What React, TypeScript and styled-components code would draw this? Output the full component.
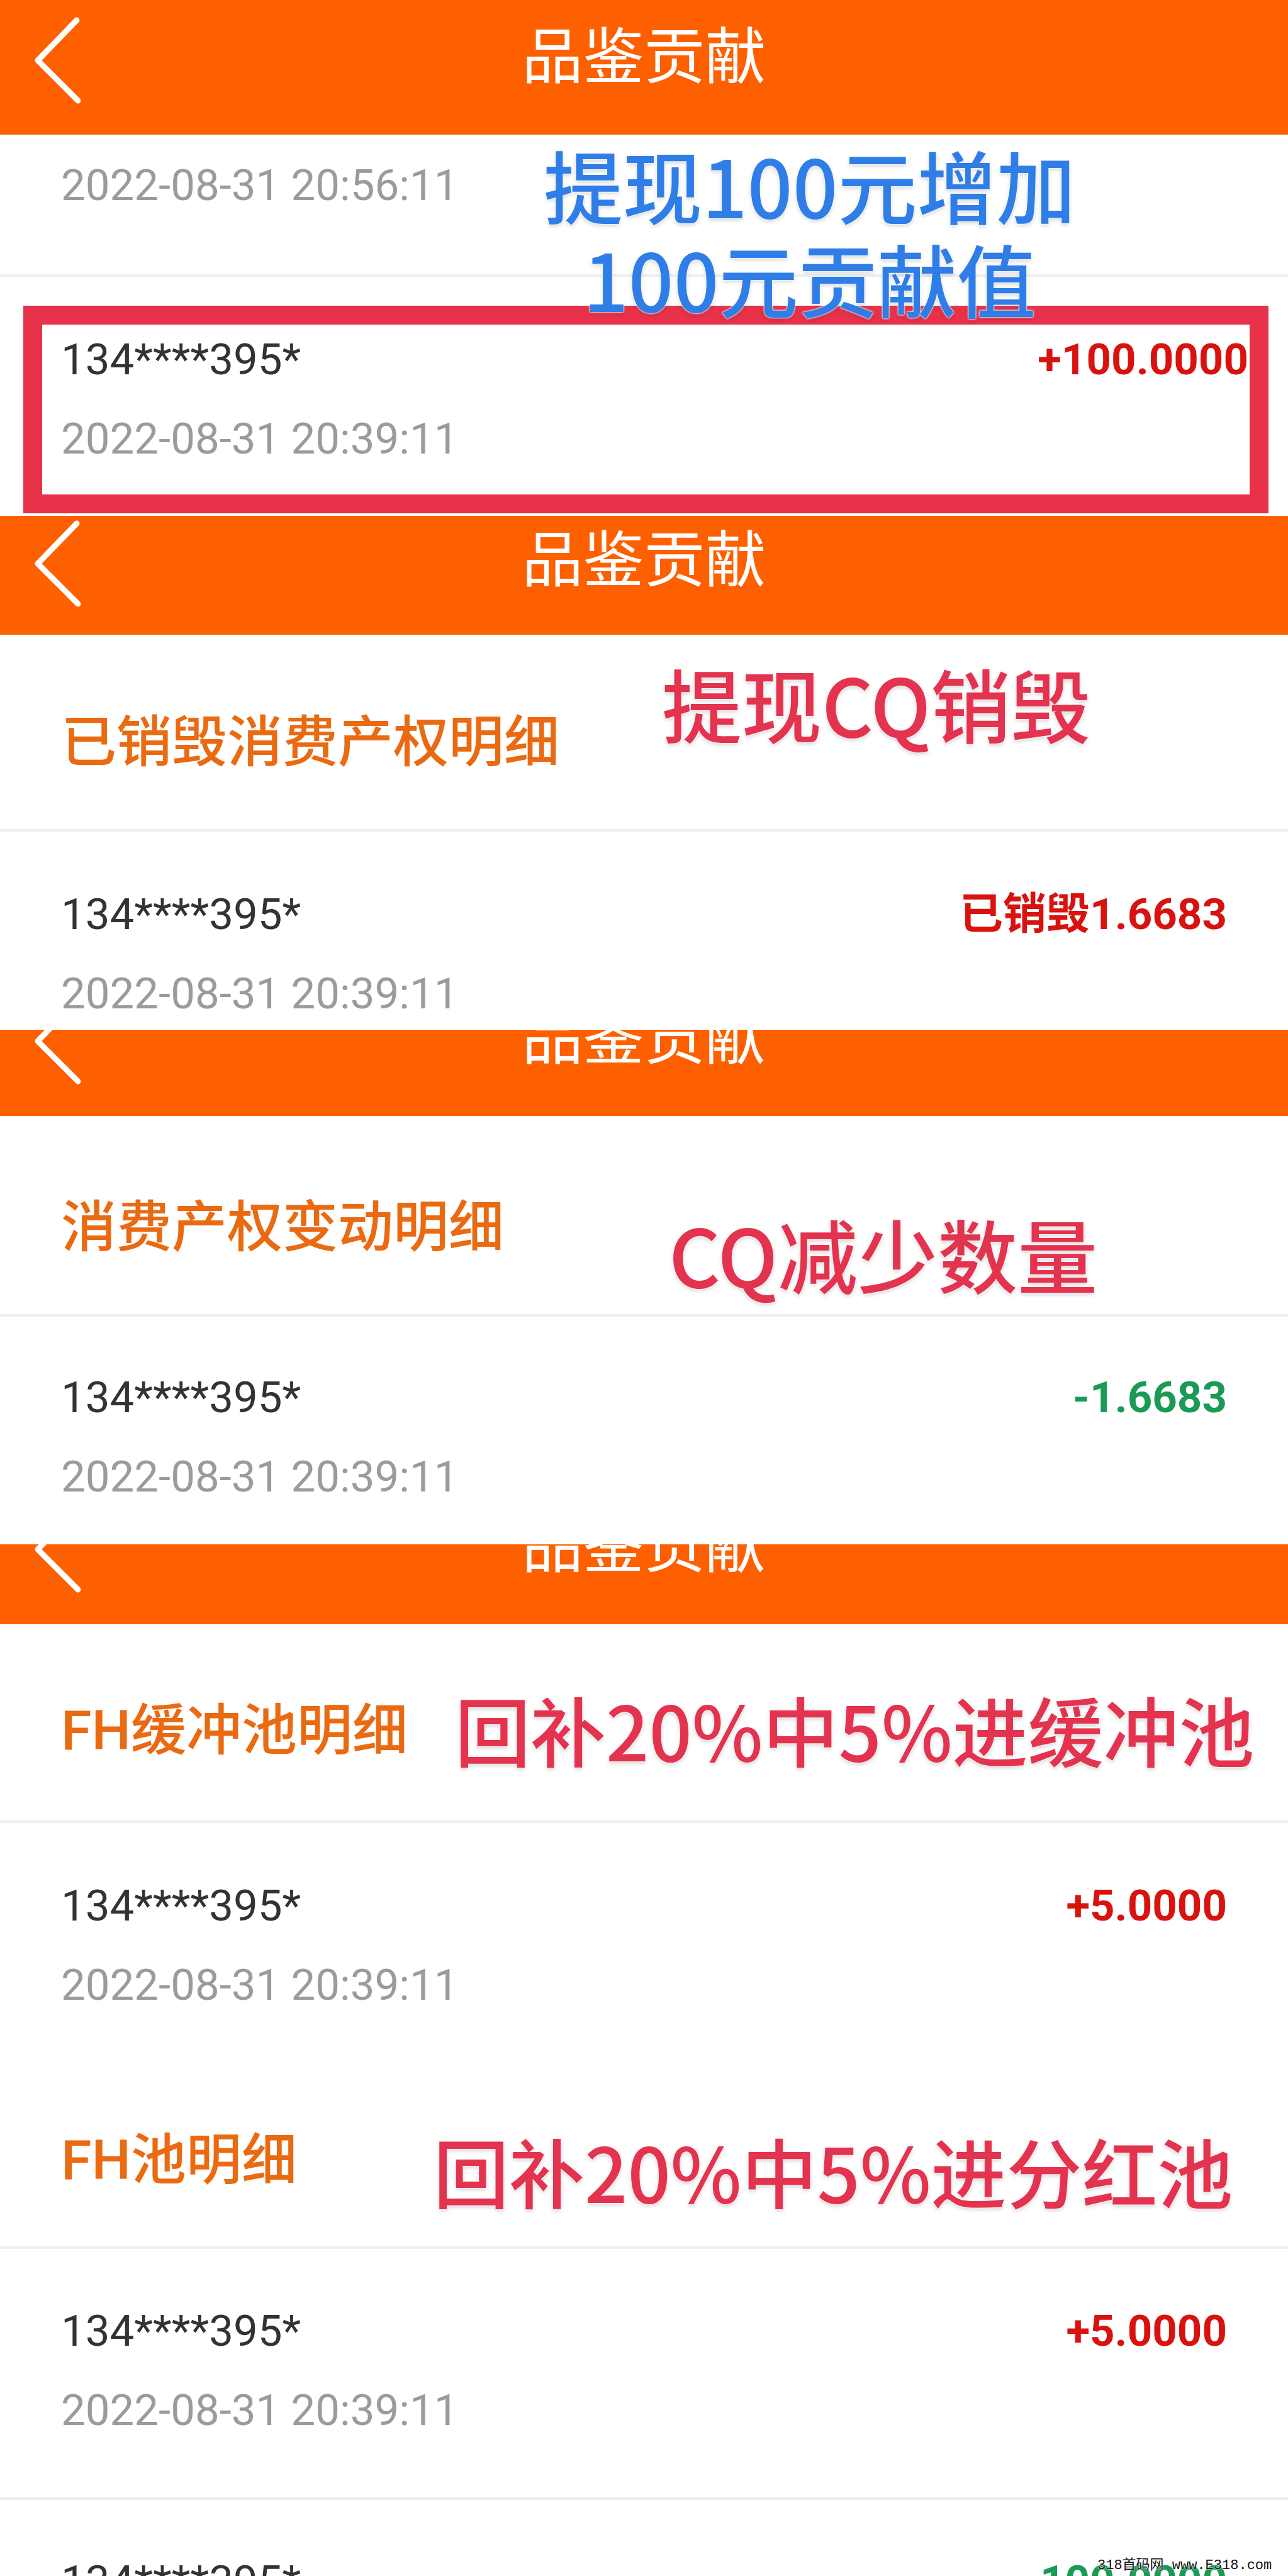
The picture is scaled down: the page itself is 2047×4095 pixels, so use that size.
import React from 'react';
import styled, {createGlobalStyle} from 'styled-components';

const GlobalStyle = createGlobalStyle`
    html, body {
        margin: 0;
        padding: 0;
        background: #fff;
    }
    body {
        font-family: Roboto, 'Noto Sans CJK SC', sans-serif;
    }
`;

const CJK = `'Noto Sans CJK SC', 'Noto Sans', sans-serif`;

const Page = styled.div`
    position: relative;
    width: 2047px;
    height: 4095px;
    overflow: hidden;
    background: #fff;
`;

const Screen = styled.section`
    position: relative;
`;

const Header = styled.header<{$height: number}>`
    height: ${(p) => p.$height}px;
    overflow: hidden;
    background: #fe6000;
`;

const Bar = styled.div<{$height: number; $offset: number}>`
    height: ${(p) => p.$height}px;
    margin-top: ${(p) => p.$offset}px;
    display: grid;
    grid-template-columns: 1fr auto 1fr;
    align-items: center;
`;

const Back = styled.svg`
    margin-left: 52px;
    margin-top: 6px;
`;

const Title = styled.h1`
    margin: 0 0 24px;
    font-family: ${CJK};
    font-size: 97px;
    font-weight: 400;
    line-height: 1;
    color: #fff;
`;

const Divider = styled.div`
    height: 4px;
    background: #efefef;
`;

const TitleBlock = styled.div<{$height: number; $pad: number}>`
    position: relative;
    box-sizing: border-box;
    height: ${(p) => p.$height}px;
    padding: ${(p) => p.$pad}px 0 0 97px;
`;

const SectionTitle = styled.h2`
    margin: 0;
    font-family: Roboto, ${CJK};
    font-size: 88px;
    font-weight: 500;
    line-height: 100px;
    color: #ea6a12;
`;

const Row = styled.div<{$height: number; $pad: number}>`
    box-sizing: border-box;
    height: ${(p) => p.$height}px;
    padding: ${(p) => p.$pad}px 97px 0 97px;
`;

const Line = styled.div`
    display: flex;
    justify-content: space-between;
    align-items: center;
    height: 80px;
`;

const Name = styled.span`
    font-size: 69px;
    line-height: 80px;
    color: #333;
`;

const Amount = styled.span<{$tone: 'red' | 'green'}>`
    font-family: Roboto, ${CJK};
    font-size: 69px;
    font-weight: 700;
    line-height: 80px;
    color: ${(p) => (p.$tone === 'red' ? '#d8130f' : '#1b9a55')};
`;

const Time = styled.div<{$gap?: number}>`
    margin-top: ${(p) => p.$gap ?? 46}px;
    font-size: 69px;
    line-height: 80px;
    color: #9b9b9b;
`;

const Highlight = styled.div`
    box-sizing: border-box;
    height: 330px;
    margin: 46px 31px 4px 37px;
    padding: 16px 2px 0 30px;
    border: 30px solid #e7324a;
`;

const Note = styled.div<{$left: number; $center: number; $size: number; $color: string; $lh?: number}>`
    position: absolute;
    left: ${(p) => p.$left}px;
    top: ${(p) => p.$center}px;
    transform: translateY(-50%);
    font-family: ${CJK};
    font-size: ${(p) => p.$size}px;
    font-weight: 500;
    line-height: ${(p) => p.$lh ?? p.$size}px;
    color: ${(p) => p.$color};
    text-align: center;
    white-space: nowrap;
    text-shadow: 0 0 3px #fff, 0 0 3px #fff, 0 3px 6px rgba(0, 0, 0, 0.18);
`;

const Watermark = styled.div`
    position: absolute;
    left: 1744px;
    bottom: 2px;
    font-family: 'Liberation Mono', ${CJK};
    font-size: 22px;
    line-height: 28px;
    color: #111;
    white-space: nowrap;
    text-shadow: 0 0 2px #fff, 0 0 2px #fff;
`;

const BLUE = '#2f7ee8';
const PINK = '#e3334f';

type HeadProps = {height: number; bar: number; offset?: number};

const AppHeader = ({height, bar, offset = 0}: HeadProps) => (
    <Header $height={height}>
        <Bar
            $height={bar}
            $offset={offset}
        >
            <Back
                width='80'
                height='140'
                viewBox='0 0 80 140'
            >
                <path
                    d='M70 6 L8 70 L72 134'
                    fill='none'
                    stroke='#fff'
                    strokeWidth='9'
                    strokeLinecap='round'
                    strokeLinejoin='round'
                />
            </Back>
            <Title>{'品鉴贡献'}</Title>
            <span/>
        </Bar>
    </Header>
);

type RecordProps = {height: number; pad: number; amount: string; tone: 'red' | 'green'};

const Record = ({height, pad, amount, tone}: RecordProps) => (
    <Row
        $height={height}
        $pad={pad}
    >
        <Line>
            <Name>{'134****395*'}</Name>
            <Amount $tone={tone}>{amount}</Amount>
        </Line>
        <Time>{'2022-08-31 20:39:11'}</Time>
    </Row>
);

const App = () => (
    <Page>
        <GlobalStyle/>

        <Screen>
            <AppHeader
                height={214}
                bar={186}
            />
            <Row
                $height={222}
                $pad={41}
            >
                <Time $gap={0}>{'2022-08-31 20:56:11'}</Time>
            </Row>
            <Divider/>
            <Highlight>
                <Line>
                    <Name>{'134****395*'}</Name>
                    <Amount $tone='red'>{'+100.0000'}</Amount>
                </Line>
                <Time>{'2022-08-31 20:39:11'}</Time>
            </Highlight>
            <Note
                $left={864}
                $center={367}
                $size={126}
                $lh={149}
                $color={BLUE}
            >
                {'提现100元增加'}
                <br/>
                {'100元贡献值'}
            </Note>
        </Screen>

        <Screen>
            <AppHeader
                height={189}
                bar={134}
            />
            <TitleBlock
                $height={309}
                $pad={121}
            >
                <SectionTitle>{'已销毁消费产权明细'}</SectionTitle>
                <Note
                    $left={1052}
                    $center={108}
                    $size={127}
                    $color={PINK}
                >
                    {'提现CQ销毁'}
                </Note>
            </TitleBlock>
            <Divider/>
            <Record
                height={315}
                pad={92}
                amount='已销毁1.6683'
                tone='red'
            />
        </Screen>

        <Screen>
            <AppHeader
                height={137}
                bar={134}
                offset={-58}
            />
            <TitleBlock
                $height={315}
                $pad={127}
            >
                <SectionTitle>{'消费产权变动明细'}</SectionTitle>
                <Note
                    $left={1063}
                    $center={218}
                    $size={127}
                    $color={PINK}
                >
                    {'CQ减少数量'}
                </Note>
            </TitleBlock>
            <Divider/>
            <Record
                height={362}
                pad={89}
                amount='-1.6683'
                tone='green'
            />
        </Screen>

        <Screen>
            <AppHeader
                height={127}
                bar={134}
                offset={-68}
            />
            <TitleBlock
                $height={312}
                $pad={119}
            >
                <SectionTitle>{'FH缓冲池明细'}</SectionTitle>
                <Note
                    $left={723}
                    $center={166}
                    $size={120}
                    $color={PINK}
                >
                    {'回补20%中5%进缓冲池'}
                </Note>
            </TitleBlock>
            <Divider/>
            <Record
                height={402}
                pad={92}
                amount='+5.0000'
                tone='red'
            />
            <TitleBlock
                $height={271}
                $pad={84}
            >
                <SectionTitle>{'FH池明细'}</SectionTitle>
                <Note
                    $left={689}
                    $center={150}
                    $size={120}
                    $color={PINK}
                >
                    {'回补20%中5%进分红池'}
                </Note>
            </TitleBlock>
            <Divider/>
            <Record
                height={395}
                pad={91}
                amount='+5.0000'
                tone='red'
            />
            <Divider/>
            <Record
                height={300}
                pad={90}
                amount='100.0000'
                tone='green'
            />
        </Screen>

        <Watermark>{'318首码网 www.E318.com'}</Watermark>
    </Page>
);

export default App;
